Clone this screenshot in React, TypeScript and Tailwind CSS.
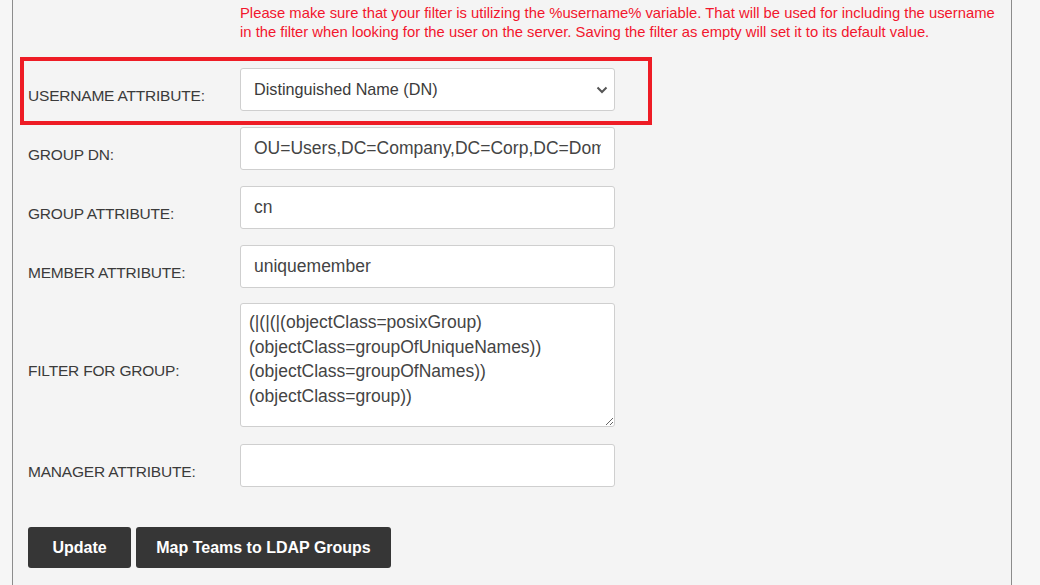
import React from 'react';

const labelCls = "w-[212px] shrink-0 pt-3 text-[15.5px] uppercase text-[#3b3b3b] font-['Liberation_Sans',sans-serif] tracking-[-0.2px]";
const inputCls = "w-[375px] h-[43px] rounded-[3px] border border-[#cfcfcf] bg-white px-[13px] text-[17.5px] text-[#444] font-['Liberation_Sans',sans-serif] outline-none";

const Field = ({ label, value }: { label: string; value: string }) => (
  <div className="flex items-center">
    <div className={labelCls}>{label}</div>
    <input className={inputCls} defaultValue={value} readOnly />
  </div>
);

const App = () => {
  return (
    <div className="min-h-screen bg-[#f6f6f6] pl-3 font-['Liberation_Sans',sans-serif]">
      <div className="w-[1000px] h-[585px] overflow-hidden border-l border-r border-[#8c8c8c] bg-[#f4f4f4] pl-[15px]">
        {/* warning */}
        <div className="pl-[212px] pt-[4px] w-[985px]">
          <p className="w-[760px] text-[14.8px] leading-[19px] text-[#f2162d]">
            Please make sure that your filter is utilizing the %username% variable. That will be used for including the username in the filter when looking for the user on the server. Saving the filter as empty will set it to its default value.
          </p>
        </div>

        <div className="mt-[26px] flex flex-col gap-4">
          {/* username attribute, outlined */}
          <div className="relative flex items-center">
            <div className="absolute -left-2 -top-[11px] w-[632px] h-[68px] border-4 border-[#ee1c25] pointer-events-none" />
            <div className={labelCls}>Username Attribute:</div>
            <div className="relative w-[375px] h-[43px] rounded-[3px] border border-[#cfcfcf] bg-white flex items-center px-[13px]">
              <span className="text-[16.2px] text-[#3b3b3b]">Distinguished Name (DN)</span>
              <svg className="absolute right-[6px] top-[17px]" width="12" height="8" viewBox="0 0 12 8">
                <path d="M1.5 1.5 L6 6 L10.5 1.5" fill="none" stroke="#555" strokeWidth="2" />
              </svg>
            </div>
          </div>

          <Field label="Group DN:" value="OU=Users,DC=Company,DC=Corp,DC=Domain" />
          <Field label="Group Attribute:" value="cn" />
          <Field label="Member Attribute:" value="uniquemember" />

          <div className="-mt-px flex items-center">
            <div className={labelCls}>Filter for group:</div>
            <textarea
              className="w-[375px] h-[124px] rounded-[3px] border border-[#cfcfcf] bg-white px-[8px] pt-[6px] text-[17.5px] leading-[24.5px] text-[#444] font-['Liberation_Sans',sans-serif] outline-none"
              defaultValue="(|(|(|(objectClass=posixGroup)(objectClass=groupOfUniqueNames))(objectClass=groupOfNames))(objectClass=group))"
              readOnly
            />
          </div>

          <div className="mt-px">
            <Field label="Manager Attribute:" value="" />
          </div>
        </div>

        <div className="mt-[40px] flex gap-[5px]">
          <button className="w-[103px] h-[41px] rounded-[3px] bg-[#363636] text-white text-[16px] font-bold">Update</button>
          <button className="w-[255px] h-[41px] rounded-[3px] bg-[#363636] text-white text-[16px] font-bold">Map Teams to LDAP Groups</button>
        </div>
      </div>
    </div>
  );
};

export default App;
